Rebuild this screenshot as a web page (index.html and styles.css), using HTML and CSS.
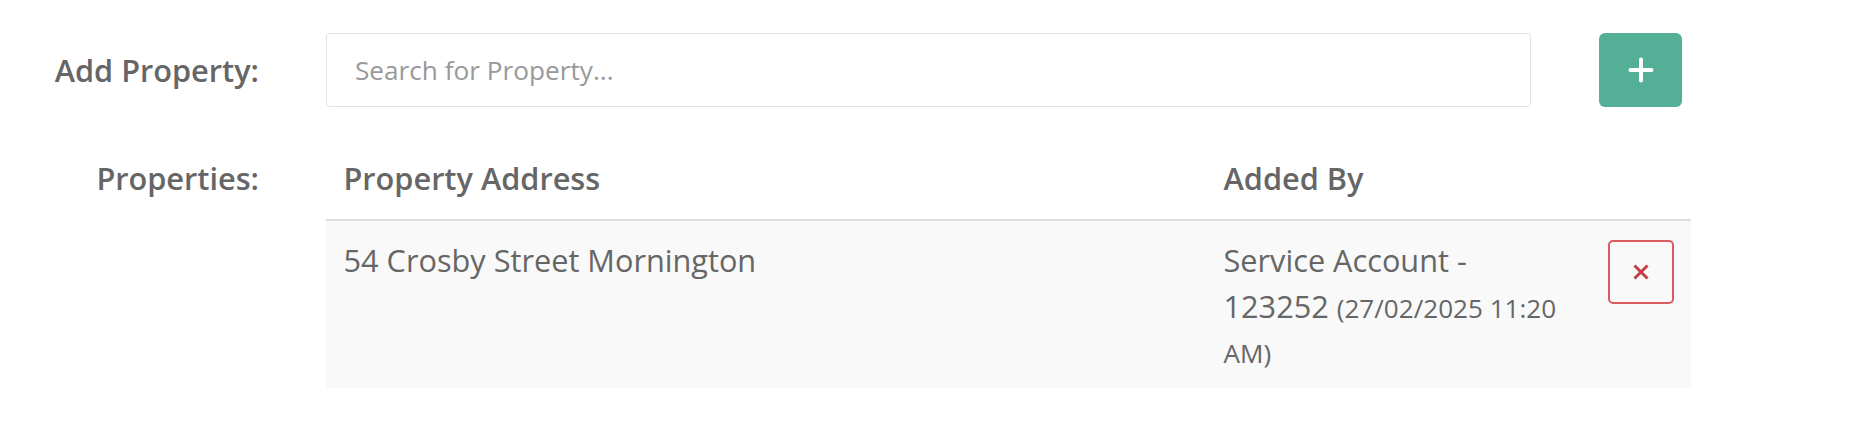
FILE: index.html
```html
<!DOCTYPE html>
<html>
<head>
<meta charset="utf-8">
<link rel="stylesheet" href="styles.css">
</head>
<body>
<div class="form">
  <div class="form-row row-add">
    <label class="label" for="search">Add Property:</label>
    <input id="search" class="search" type="text" placeholder="Search for Property...">
    <button class="btn-add" type="button" aria-label="Add">
      <svg width="26" height="26" viewBox="0 0 26 26"><path d="M13 2.5V23.5M2.5 13H23.5" stroke="#fff" stroke-width="4" stroke-linecap="round" fill="none"/></svg>
    </button>
  </div>
  <div class="form-row row-props">
    <div class="label">Properties:</div>
    <table class="props">
      <colgroup>
        <col class="c-addr">
        <col class="c-by">
        <col class="c-act">
      </colgroup>
      <thead>
        <tr><th>Property Address</th><th>Added By</th><th></th></tr>
      </thead>
      <tbody>
        <tr>
          <td>54 Crosby Street Mornington</td>
          <td>Service Account - 123252 <small>(27/02/2025 11:20 AM)</small></td>
          <td class="act">
            <button class="btn-del" type="button" aria-label="Remove">
              <svg width="18" height="18" viewBox="0 0 18 18"><path d="M2.5 2.5L15.5 15.5M15.5 2.5L2.5 15.5" stroke="#c23d46" stroke-width="3" fill="none"/></svg>
            </button>
          </td>
        </tr>
      </tbody>
    </table>
  </div>
</div>
</body>
</html>
```

FILE: styles.css
```css
html, body {
  margin: 0;
  padding: 0;
  background: #fff;
}
body {
  font-family: "Open Sans", "Liberation Sans", sans-serif;
  color: #666;
  font-size: 30.7px;
}
.form {
  padding-top: 33px;
}
.form-row {
  display: flex;
}
.row-add {
  align-items: center;
}
.label {
  width: 259px;
  flex: 0 0 259px;
  text-align: right;
  font-weight: 600;
  line-height: 45px;
  color: #666;
  margin-right: 67px;
}
.search {
  box-sizing: border-box;
  width: 1205px;
  height: 74px;
  border: 1.5px solid #e3e3e3;
  border-radius: 3px;
  padding: 0 28px;
  font-family: "Open Sans", "Liberation Sans", sans-serif;
  font-size: 26.2px;
  color: #555;
  outline: none;
}
.search::placeholder {
  color: #999;
}
.btn-add {
  box-sizing: border-box;
  width: 83px;
  height: 74px;
  margin-left: 68px;
  border: none;
  border-radius: 6px;
  background: #53b096;
  display: flex;
  align-items: center;
  justify-content: center;
  padding: 0;
}
.row-props {
  margin-top: 32px;
  align-items: flex-start;
}
.row-props .label {
  padding-top: 17px;
}
.props {
  width: 1365px;
  border-collapse: collapse;
  table-layout: fixed;
  font-size: 30.7px;
  color: #666;
}
.c-addr { width: 880px; }
.c-by { width: 383px; }
.c-act { width: 102px; }
.props th {
  text-align: left;
  font-weight: 600;
  line-height: 45px;
  padding: 17px 17.5px 18px;
  border-bottom: 2px solid #dedede;
}
.props td {
  vertical-align: top;
  line-height: 45.5px;
  padding: 17px 17.5px 13.5px;
  background: #f9f9f9;
}
.props small {
  font-size: 85%;
  line-height: 1;
}
.props td.act {
  padding-top: 19px;
  text-align: right;
}
.btn-del {
  box-sizing: border-box;
  width: 66px;
  height: 64px;
  border: 2px solid #dc5a60;
  border-radius: 5px;
  background: transparent;
  padding: 0;
  display: inline-flex;
  align-items: center;
  justify-content: center;
  vertical-align: top;
}
```
